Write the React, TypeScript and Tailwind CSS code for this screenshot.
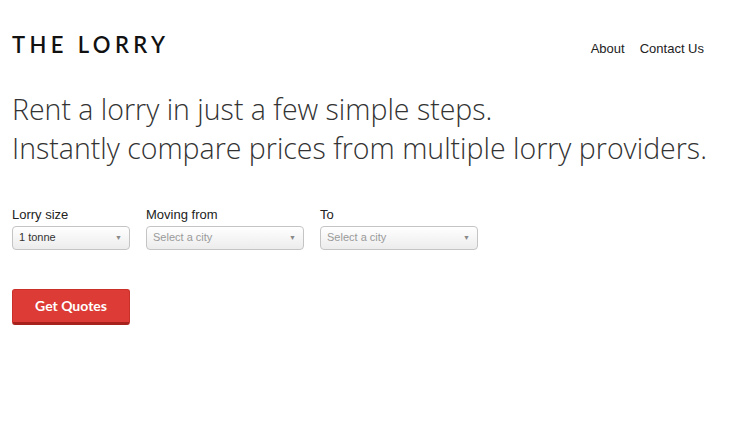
function Select({ label, value, placeholder, width }: { label: string; value?: string; placeholder?: string; width: string }) {
  return (
    <div className="flex flex-col">
      <label className="mb-[3px] text-[13px] leading-[16px] text-[#222]">{label}</label>
      <div
        className={`${width} flex h-[24px] items-center justify-between rounded-[4px] border border-[#c4c4c4] bg-gradient-to-b from-white to-[#ececec] pl-[6px] pr-[7px] text-[11px] shadow-[inset_0_1px_0_#fff]`}
      >
        <span className={value ? "text-[#333]" : "text-[#9a9a9a]"}>{value ?? placeholder}</span>
        <span className="text-[7px] leading-none text-[#888]">▼</span>
      </div>
    </div>
  );
}

export default function App() {
  return (
    <div className="min-h-[429px] w-full bg-white px-[12px] font-['Liberation_Sans',Arial,sans-serif]">
      <header className="flex items-start justify-between pt-[34px]">
        <div className="font-['Lato',sans-serif] text-[22px] font-semibold leading-[22px] tracking-[0.2em] text-[#111]">
          THE LORRY
        </div>
        <nav className="mr-[18px] mt-[5px] flex gap-[15px] text-[13px] text-[#222]">
          <a href="#">About</a>
          <a href="#">Contact Us</a>
        </nav>
      </header>

      <h1 className="mt-[31px] font-['Open_Sans',sans-serif] text-[28.5px] font-light leading-[39px] text-[#333]">
        Rent a lorry in just a few simple steps.
        <br />
        Instantly compare prices from multiple lorry providers.
      </h1>

      <div className="mt-[39px] flex gap-[16px]">
        <Select label="Lorry size" value="1 tonne" width="w-[118px]" />
        <Select label="Moving from" placeholder="Select a city" width="w-[158px]" />
        <Select label="To" placeholder="Select a city" width="w-[158px]" />
      </div>

      <button className="mt-[39px] h-[36px] w-[118px] rounded-[3px] border border-[#c9302a] border-b-[3px] border-b-[#a8221d] bg-[#dd3b35] font-['Lato',sans-serif] text-[14px] font-bold text-white">
        Get Quotes
      </button>
    </div>
  );
}
